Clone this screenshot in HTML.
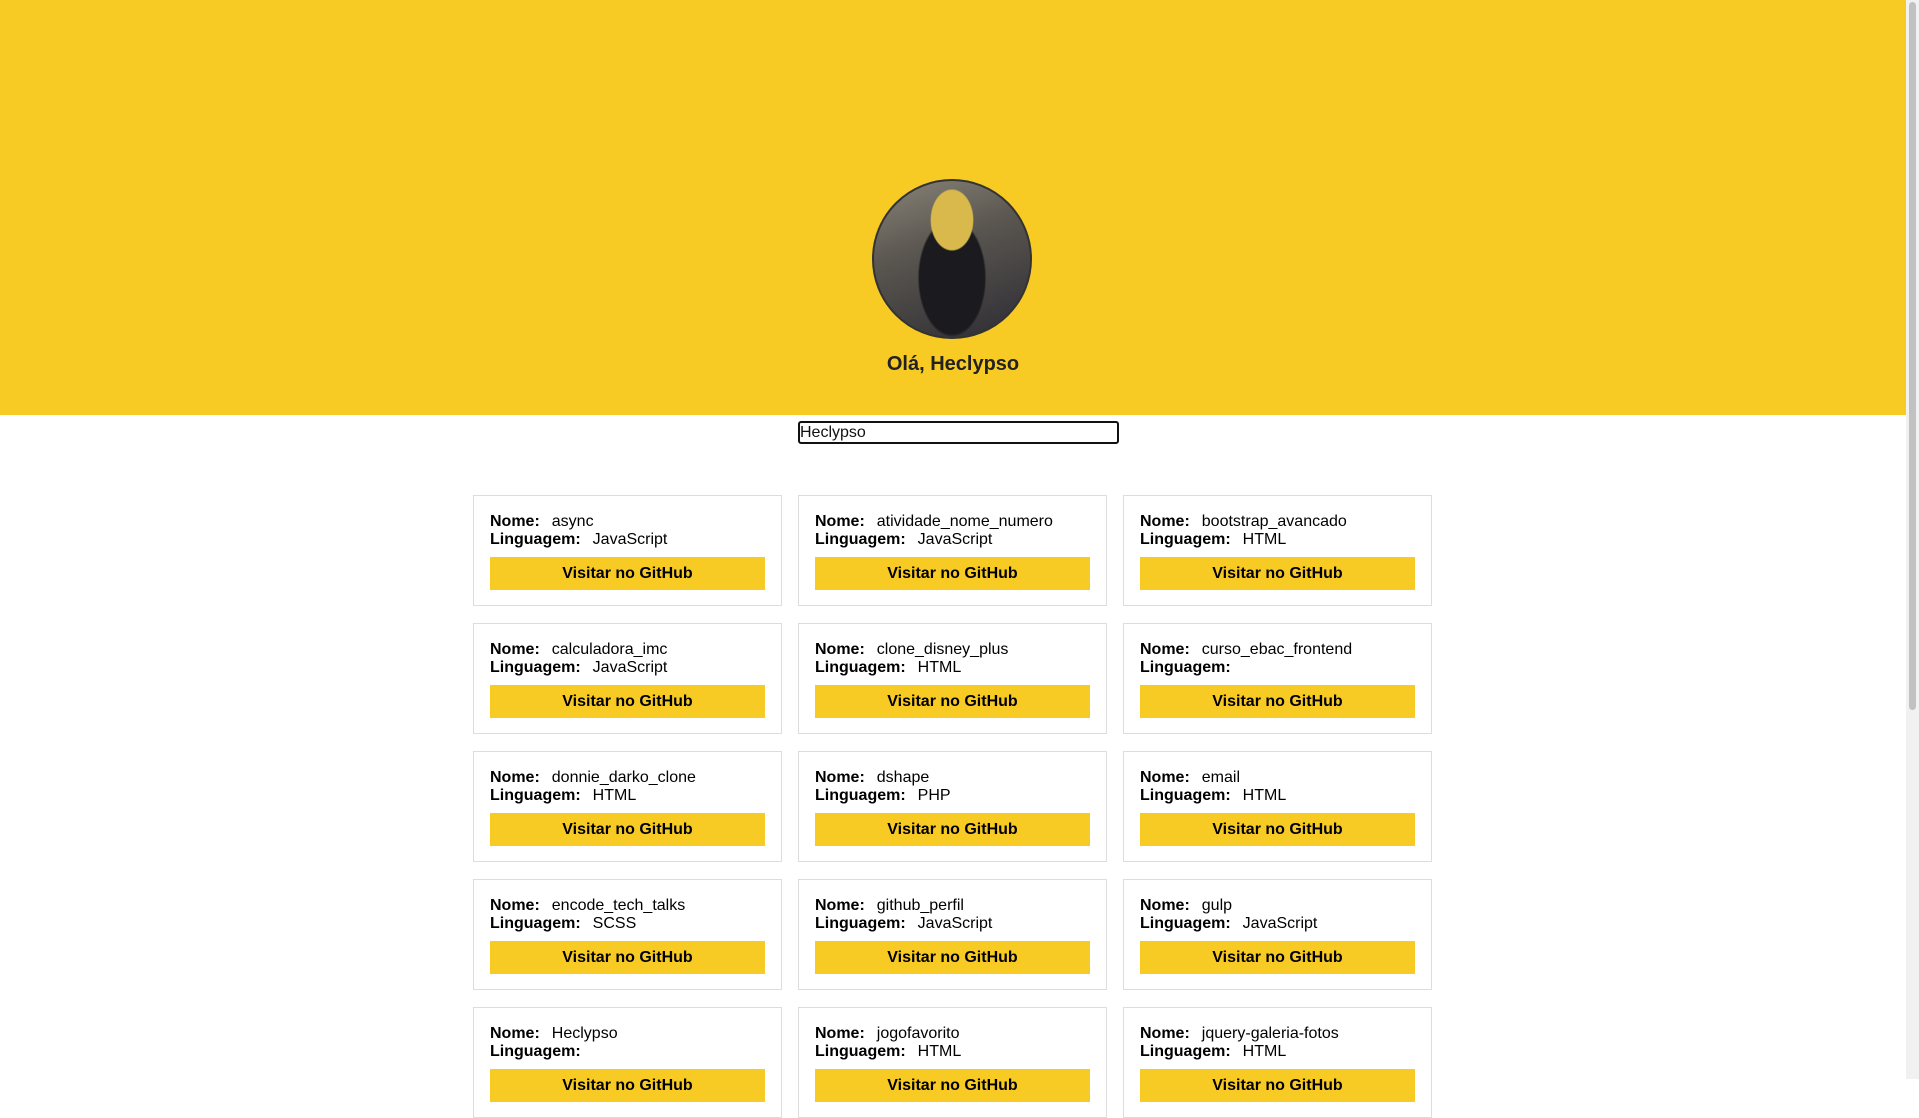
<!DOCTYPE html>
<html><head><meta charset="utf-8"><style>
*{box-sizing:border-box;margin:0;padding:0}
html,body{width:1919px;height:1079px;overflow:hidden;background:#fff;font-family:"Liberation Sans",Arial,sans-serif;color:#000}
header{position:absolute;left:0;top:0;width:1906px;height:415px;background:#f8ca24}
.av{position:absolute;left:872px;top:179px;width:160px;height:160px;border-radius:50%;border:2px solid #333;overflow:hidden;background:radial-gradient(ellipse 14% 20% at 50% 25%,#d9b94c 0 95%,transparent 100%),radial-gradient(ellipse 22% 38% at 50% 62%,#1b1b1f 0 95%,transparent 100%),linear-gradient(160deg,#8a8478 0%,#5a5650 40%,#2d2c33 100%)}
h1{position:absolute;left:0;width:1906px;top:353px;text-align:center;font-size:20px;font-weight:bold;color:#222}
input{position:absolute;left:798px;top:421px;width:321px;height:23px;border:2px solid #111;border-radius:3px;font:16px "Liberation Sans",sans-serif;padding:0;color:#111;background:#fff}
.grid{position:absolute;left:473px;top:495px;width:960px;display:grid;grid-template-columns:repeat(3,309px);column-gap:16px;row-gap:17px}
.c{height:111px;border:1px solid #ddd;padding:17px 16px 0}
.c p{font-size:16px;line-height:18px;white-space:nowrap}
.c b{margin-right:12px}
.btn{margin-top:8px;height:33px;background:#f8ca24;font-weight:bold;font-size:16px;text-align:center;line-height:33px}
.sb{position:absolute;left:1906px;top:0;width:13px;height:1079px;background:#f1f1f1}
.th{position:absolute;left:1909px;top:2px;width:7px;height:708px;background:#c1c1c1;border-radius:4px}
</style></head><body>
<header><div class="av"></div><h1>Olá, Heclypso</h1></header>
<input value="Heclypso">
<div class="grid">
<div class="c"><p><b>Nome:</b>async</p><p><b>Linguagem:</b>JavaScript</p><div class="btn">Visitar no GitHub</div></div>
<div class="c"><p><b>Nome:</b>atividade_nome_numero</p><p><b>Linguagem:</b>JavaScript</p><div class="btn">Visitar no GitHub</div></div>
<div class="c"><p><b>Nome:</b>bootstrap_avancado</p><p><b>Linguagem:</b>HTML</p><div class="btn">Visitar no GitHub</div></div>
<div class="c"><p><b>Nome:</b>calculadora_imc</p><p><b>Linguagem:</b>JavaScript</p><div class="btn">Visitar no GitHub</div></div>
<div class="c"><p><b>Nome:</b>clone_disney_plus</p><p><b>Linguagem:</b>HTML</p><div class="btn">Visitar no GitHub</div></div>
<div class="c"><p><b>Nome:</b>curso_ebac_frontend</p><p><b>Linguagem:</b></p><div class="btn">Visitar no GitHub</div></div>
<div class="c"><p><b>Nome:</b>donnie_darko_clone</p><p><b>Linguagem:</b>HTML</p><div class="btn">Visitar no GitHub</div></div>
<div class="c"><p><b>Nome:</b>dshape</p><p><b>Linguagem:</b>PHP</p><div class="btn">Visitar no GitHub</div></div>
<div class="c"><p><b>Nome:</b>email</p><p><b>Linguagem:</b>HTML</p><div class="btn">Visitar no GitHub</div></div>
<div class="c"><p><b>Nome:</b>encode_tech_talks</p><p><b>Linguagem:</b>SCSS</p><div class="btn">Visitar no GitHub</div></div>
<div class="c"><p><b>Nome:</b>github_perfil</p><p><b>Linguagem:</b>JavaScript</p><div class="btn">Visitar no GitHub</div></div>
<div class="c"><p><b>Nome:</b>gulp</p><p><b>Linguagem:</b>JavaScript</p><div class="btn">Visitar no GitHub</div></div>
<div class="c"><p><b>Nome:</b>Heclypso</p><p><b>Linguagem:</b></p><div class="btn">Visitar no GitHub</div></div>
<div class="c"><p><b>Nome:</b>jogofavorito</p><p><b>Linguagem:</b>HTML</p><div class="btn">Visitar no GitHub</div></div>
<div class="c"><p><b>Nome:</b>jquery-galeria-fotos</p><p><b>Linguagem:</b>HTML</p><div class="btn">Visitar no GitHub</div></div>
</div>
<div class="sb"></div><div class="th"></div>
</body></html>
